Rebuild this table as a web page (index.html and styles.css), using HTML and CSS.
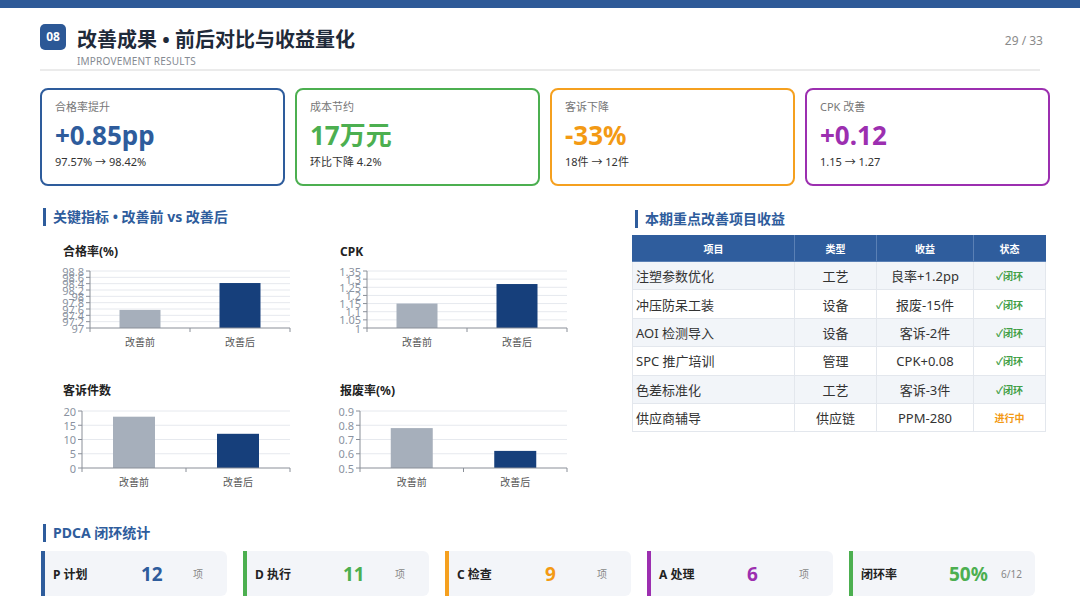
FILE: index.html
```html
<!DOCTYPE html>
<html lang="zh-CN">
<head>
<meta charset="utf-8">
<title>改善成果</title>
<link rel="stylesheet" href="styles.css">
</head>
<body>
<div class="topbar"></div>
<header class="header">
  <div class="brand">
    <div class="badge">08</div>
    <div class="titles">
      <h1 class="title">改善成果 • 前后对比与收益量化</h1>
      <div class="subtitle">IMPROVEMENT RESULTS</div>
    </div>
  </div>
  <div class="page-no">29 / 33</div>
</header>

<section class="kpis">
  <div class="kpi kpi-blue">
    <div class="kpi-label">合格率提升</div>
    <div class="kpi-value">+0.85pp</div>
    <div class="kpi-sub">97.57% → 98.42%</div>
  </div>
  <div class="kpi kpi-green">
    <div class="kpi-label">成本节约</div>
    <div class="kpi-value">17万元</div>
    <div class="kpi-sub">环比下降 4.2%</div>
  </div>
  <div class="kpi kpi-orange">
    <div class="kpi-label">客诉下降</div>
    <div class="kpi-value">-33%</div>
    <div class="kpi-sub">18件 → 12件</div>
  </div>
  <div class="kpi kpi-purple">
    <div class="kpi-label">CPK 改善</div>
    <div class="kpi-value">+0.12</div>
    <div class="kpi-sub">1.15 → 1.27</div>
  </div>
</section>

<section class="mid">
  <div class="left">
    <h2 class="sec-title">关键指标 • 改善前 vs 改善后</h2>
    <div class="charts">
      <div class="chart">
        <div class="chart-title">合格率(%)</div>
        <svg class="plot" width="277" height="90" viewBox="0 0 277 90">
          <g class="grid">
            <line x1="50" x2="250" y1="9" y2="9"/><line x1="50" x2="250" y1="15.33" y2="15.33"/><line x1="50" x2="250" y1="21.67" y2="21.67"/><line x1="50" x2="250" y1="28" y2="28"/><line x1="50" x2="250" y1="34.33" y2="34.33"/><line x1="50" x2="250" y1="40.67" y2="40.67"/><line x1="50" x2="250" y1="47" y2="47"/><line x1="50" x2="250" y1="53.33" y2="53.33"/><line x1="50" x2="250" y1="59.67" y2="59.67"/>
          </g>
          <rect class="bar-before" x="79.5" y="47.95" width="41" height="18.05"/>
          <rect class="bar-after" x="179.5" y="21.03" width="41" height="44.97"/>
          <g class="axis">
            <line x1="50" x2="50" y1="9" y2="66"/><line x1="50" x2="250" y1="66" y2="66"/>
            <line x1="46" x2="50" y1="9" y2="9"/><line x1="46" x2="50" y1="15.33" y2="15.33"/><line x1="46" x2="50" y1="21.67" y2="21.67"/><line x1="46" x2="50" y1="28" y2="28"/><line x1="46" x2="50" y1="34.33" y2="34.33"/><line x1="46" x2="50" y1="40.67" y2="40.67"/><line x1="46" x2="50" y1="47" y2="47"/><line x1="46" x2="50" y1="53.33" y2="53.33"/><line x1="46" x2="50" y1="59.67" y2="59.67"/><line x1="46" x2="50" y1="66" y2="66"/>
            <line x1="50" x2="50" y1="66" y2="70"/><line x1="150" x2="150" y1="66" y2="70"/><line x1="250" x2="250" y1="66" y2="70"/>
          </g>
          <g class="ylab">
            <text x="44" y="9">98.8</text><text x="44" y="15.33">98.6</text><text x="44" y="21.67">98.4</text><text x="44" y="28">98.2</text><text x="44" y="34.33">98</text><text x="44" y="40.67">97.8</text><text x="44" y="47">97.6</text><text x="44" y="53.33">97.4</text><text x="44" y="59.67">97.2</text><text x="44" y="66">97</text>
          </g>
          <g class="xlab"><text x="100" y="80">改善前</text><text x="200" y="80">改善后</text></g>
        </svg>
      </div>
      <div class="chart">
        <div class="chart-title">CPK</div>
        <svg class="plot" width="277" height="90" viewBox="0 0 277 90">
          <g class="grid">
            <line x1="50" x2="250" y1="9" y2="9"/><line x1="50" x2="250" y1="17.14" y2="17.14"/><line x1="50" x2="250" y1="25.29" y2="25.29"/><line x1="50" x2="250" y1="33.43" y2="33.43"/><line x1="50" x2="250" y1="41.57" y2="41.57"/><line x1="50" x2="250" y1="49.71" y2="49.71"/><line x1="50" x2="250" y1="57.86" y2="57.86"/>
          </g>
          <rect class="bar-before" x="79.5" y="41.57" width="41" height="24.43"/>
          <rect class="bar-after" x="179.5" y="22.03" width="41" height="43.97"/>
          <g class="axis">
            <line x1="50" x2="50" y1="9" y2="66"/><line x1="50" x2="250" y1="66" y2="66"/>
            <line x1="46" x2="50" y1="9" y2="9"/><line x1="46" x2="50" y1="17.14" y2="17.14"/><line x1="46" x2="50" y1="25.29" y2="25.29"/><line x1="46" x2="50" y1="33.43" y2="33.43"/><line x1="46" x2="50" y1="41.57" y2="41.57"/><line x1="46" x2="50" y1="49.71" y2="49.71"/><line x1="46" x2="50" y1="57.86" y2="57.86"/><line x1="46" x2="50" y1="66" y2="66"/>
            <line x1="50" x2="50" y1="66" y2="70"/><line x1="150" x2="150" y1="66" y2="70"/><line x1="250" x2="250" y1="66" y2="70"/>
          </g>
          <g class="ylab">
            <text x="44" y="9">1.35</text><text x="44" y="17.14">1.3</text><text x="44" y="25.29">1.25</text><text x="44" y="33.43">1.2</text><text x="44" y="41.57">1.15</text><text x="44" y="49.71">1.1</text><text x="44" y="57.86">1.05</text><text x="44" y="66">1</text>
          </g>
          <g class="xlab"><text x="100" y="80">改善前</text><text x="200" y="80">改善后</text></g>
        </svg>
      </div>
      <div class="chart">
        <div class="chart-title">客诉件数</div>
        <svg class="plot" width="277" height="90" viewBox="0 0 277 90">
          <g class="grid">
            <line x1="42" x2="250" y1="10" y2="10"/><line x1="42" x2="250" y1="24.25" y2="24.25"/><line x1="42" x2="250" y1="38.5" y2="38.5"/><line x1="42" x2="250" y1="52.75" y2="52.75"/>
          </g>
          <rect class="bar-before" x="73" y="15.7" width="42" height="51.3"/>
          <rect class="bar-after" x="177" y="32.8" width="42" height="34.2"/>
          <g class="axis">
            <line x1="42" x2="42" y1="10" y2="67"/><line x1="42" x2="250" y1="67" y2="67"/>
            <line x1="38" x2="42" y1="10" y2="10"/><line x1="38" x2="42" y1="24.25" y2="24.25"/><line x1="38" x2="42" y1="38.5" y2="38.5"/><line x1="38" x2="42" y1="52.75" y2="52.75"/><line x1="38" x2="42" y1="67" y2="67"/>
            <line x1="42" x2="42" y1="67" y2="71"/><line x1="146" x2="146" y1="67" y2="71"/><line x1="250" x2="250" y1="67" y2="71"/>
          </g>
          <g class="ylab">
            <text x="36" y="10">20</text><text x="36" y="24.25">15</text><text x="36" y="38.5">10</text><text x="36" y="52.75">5</text><text x="36" y="67">0</text>
          </g>
          <g class="xlab"><text x="94" y="81">改善前</text><text x="198" y="81">改善后</text></g>
        </svg>
      </div>
      <div class="chart">
        <div class="chart-title">报废率(%)</div>
        <svg class="plot" width="277" height="90" viewBox="0 0 277 90">
          <g class="grid">
            <line x1="43" x2="250" y1="10" y2="10"/><line x1="43" x2="250" y1="24.25" y2="24.25"/><line x1="43" x2="250" y1="38.5" y2="38.5"/><line x1="43" x2="250" y1="52.75" y2="52.75"/>
          </g>
          <rect class="bar-before" x="73.75" y="27.1" width="42" height="39.9"/>
          <rect class="bar-after" x="177.25" y="49.9" width="42" height="17.1"/>
          <g class="axis">
            <line x1="43" x2="43" y1="10" y2="67"/><line x1="43" x2="250" y1="67" y2="67"/>
            <line x1="39" x2="43" y1="10" y2="10"/><line x1="39" x2="43" y1="24.25" y2="24.25"/><line x1="39" x2="43" y1="38.5" y2="38.5"/><line x1="39" x2="43" y1="52.75" y2="52.75"/><line x1="39" x2="43" y1="67" y2="67"/>
            <line x1="43" x2="43" y1="67" y2="71"/><line x1="146.5" x2="146.5" y1="67" y2="71"/><line x1="250" x2="250" y1="67" y2="71"/>
          </g>
          <g class="ylab">
            <text x="37" y="10">0.9</text><text x="37" y="24.25">0.8</text><text x="37" y="38.5">0.7</text><text x="37" y="52.75">0.6</text><text x="37" y="67">0.5</text>
          </g>
          <g class="xlab"><text x="94.75" y="81">改善前</text><text x="198.25" y="81">改善后</text></g>
        </svg>
      </div>
    </div>
  </div>

  <div class="right">
    <h2 class="sec-title">本期重点改善项目收益</h2>
    <table class="proj">
      <colgroup><col class="c1"><col class="c2"><col class="c3"><col class="c4"></colgroup>
      <thead>
        <tr><th>项目</th><th>类型</th><th>收益</th><th>状态</th></tr>
      </thead>
      <tbody>
        <tr><td>注塑参数优化</td><td>工艺</td><td>良率+1.2pp</td><td class="st done">✓闭环</td></tr>
        <tr><td>冲压防呆工装</td><td>设备</td><td>报废-15件</td><td class="st done">✓闭环</td></tr>
        <tr><td>AOI 检测导入</td><td>设备</td><td>客诉-2件</td><td class="st done">✓闭环</td></tr>
        <tr><td>SPC 推广培训</td><td>管理</td><td>CPK+0.08</td><td class="st done">✓闭环</td></tr>
        <tr><td>色差标准化</td><td>工艺</td><td>客诉-3件</td><td class="st done">✓闭环</td></tr>
        <tr><td>供应商辅导</td><td>供应链</td><td>PPM-280</td><td class="st doing">进行中</td></tr>
      </tbody>
    </table>
  </div>
</section>

<section class="pdca">
  <h2 class="sec-title">PDCA 闭环统计</h2>
  <div class="pdca-row">
    <div class="pcard pc-blue"><span class="p-label">P 计划</span><span class="p-num">12</span><span class="p-unit">项</span></div>
    <div class="pcard pc-green"><span class="p-label">D 执行</span><span class="p-num">11</span><span class="p-unit">项</span></div>
    <div class="pcard pc-orange"><span class="p-label">C 检查</span><span class="p-num">9</span><span class="p-unit">项</span></div>
    <div class="pcard pc-purple"><span class="p-label">A 处理</span><span class="p-num">6</span><span class="p-unit">项</span></div>
    <div class="pcard pc-green"><span class="p-label">闭环率</span><span class="p-num">50%</span><span class="p-unit">6/12</span></div>
  </div>
</section>
</body>
</html>
```

FILE: styles.css
```css
* { box-sizing: border-box; }
html, body { margin: 0; padding: 0; }
body {
  width: 1080px;
  height: 608px;
  overflow: hidden;
  background: #ffffff;
  font-family: "Noto Sans", "Noto Sans CJK SC", sans-serif;
  color: #333;
}
h1, h2 { margin: 0; }

.topbar { height: 8px; background: #2e5a98; }

.header {
  margin: 0 40px;
  padding-top: 16px;
  padding-bottom: 1px;
  display: flex;
  justify-content: space-between;
  border-bottom: 2px solid #ebebeb;
}
.brand { display: flex; align-items: flex-start; }
.badge {
  width: 26px;
  height: 26px;
  border-radius: 5px;
  background: #2c5896;
  color: #fff;
  font-size: 12px;
  font-weight: 700;
  line-height: 26px;
  text-align: center;
}
.titles { margin-left: 11px; padding-top: 2px; }
.title {
  font-size: 20px;
  line-height: 28px;
  font-weight: 700;
  color: #1f2a3a;
}
.subtitle {
  font-size: 10px;
  line-height: 14px;
  color: #858a92;
  letter-spacing: 0.2px;
}
.page-no {
  padding-top: 10px;
  font-size: 12px;
  line-height: 14px;
  color: #8a8a8a;
  margin-right: -3px;
}

/* KPI cards */
.kpis {
  margin: 17px 30px 0 40px;
  display: grid;
  grid-template-columns: repeat(4, 245px);
  column-gap: 10px;
}
.kpi {
  height: 98px;
  border: 2px solid;
  border-radius: 8px;
  padding: 10px 13px 0;
}
.kpi-label { font-size: 11px; line-height: 14px; color: #777; }
.kpi-value {
  margin-top: 6px;
  font-size: 26px;
  line-height: 30px;
  font-weight: 700;
}
.kpi-sub { margin-top: 5px; font-size: 11px; line-height: 14px; color: #333; }
.kpi-blue { border-color: #2e5c9c; }
.kpi-blue .kpi-value { color: #2e5c9c; }
.kpi-green { border-color: #4caf50; }
.kpi-green .kpi-value { color: #4caf50; }
.kpi-orange { border-color: #f5a01f; }
.kpi-orange .kpi-value { color: #f39a14; }
.kpi-purple { border-color: #9c2fb0; }
.kpi-purple .kpi-value { color: #9c2fb0; }

/* section titles */
.sec-title {
  font-size: 14px;
  line-height: 18px;
  font-weight: 700;
  color: #2e5c9c;
  border-left: 3px solid #2e5c9c;
  padding-left: 7px;
  margin-left: 3px;
}

/* middle */
.mid {
  margin: 22px 0 0 40px;
  display: flex;
  align-items: flex-start;
}
.left { width: 592px; }
.charts {
  margin-top: 18px;
  display: grid;
  grid-template-columns: 277px 277px;
  row-gap: 31px;
}
.chart-title {
  padding-left: 23px;
  font-size: 12px;
  line-height: 16px;
  font-weight: 700;
  color: #222;
}
.plot { display: block; margin-top: 2px; }
.plot .grid line { stroke: #e6e9ee; stroke-width: 1; }
.plot .axis line { stroke: #8a8f98; stroke-width: 1; }
.bar-before { fill: #a6afbb; }
.bar-after { fill: #163f7b; }
.plot text { font-family: "Noto Sans", "Noto Sans CJK SC", sans-serif; }
.ylab text { font-size: 11px; fill: #8a92a0; text-anchor: end; dominant-baseline: central; }
.xlab text { font-size: 10px; fill: #555; text-anchor: middle; dominant-baseline: central; }

.right { width: 413px; padding-top: 2px; }
.right .sec-title { margin-bottom: 7px; }
.proj {
  width: 413px;
  border-collapse: collapse;
  table-layout: fixed;
}
.proj .c1 { width: 162px; }
.proj .c2 { width: 82px; }
.proj .c3 { width: 97px; }
.proj .c4 { width: 72px; }
.proj th {
  height: 26px;
  padding: 0;
  background: #2f5d9d;
  color: #fff;
  font-size: 10px;
  font-weight: 700;
  border: 1px solid #5a80b5;
  border-top-color: #2f5d9d;
}
.proj th:first-child { border-left-color: #2f5d9d; }
.proj th:last-child { border-right-color: #2f5d9d; }
.proj td {
  height: 28.4px;
  padding: 0;
  font-size: 13px;
  color: #333;
  text-align: center;
  border: 1px solid #e3e7ed;
}
.proj td:first-child { text-align: left; padding-left: 3px; }
.proj tbody tr:nth-child(odd) td { background: #f2f5f9; }
.proj td.st { font-size: 10px; font-weight: 700; }
.proj td.done { color: #43a047; }
.proj td.doing { color: #f39a14; }

/* PDCA */
.pdca { margin: 33px 0 0 40px; }
.pdca .sec-title { margin-bottom: 9px; }
.pdca-row {
  margin-left: 1px;
  display: grid;
  grid-template-columns: repeat(5, 186px);
  column-gap: 16px;
}
.pcard {
  height: 45px;
  background: #f3f5f9;
  border-left: 4px solid;
  border-radius: 0 6px 6px 0;
  padding-left: 8px;
  display: flex;
  align-items: center;
}
.p-label { width: 88px; font-size: 12px; font-weight: 700; color: #222; }
.p-num { width: 52px; font-size: 19px; font-weight: 700; line-height: 24px; }
.p-unit { font-size: 10px; color: #888; }
.pc-blue { border-left-color: #2e5c9c; }
.pc-blue .p-num { color: #2e5c9c; }
.pc-green { border-left-color: #4caf50; }
.pc-green .p-num { color: #4caf50; }
.pc-orange { border-left-color: #f5a01f; }
.pc-orange .p-num { color: #f39a14; }
.pc-purple { border-left-color: #9c2fb0; }
.pc-purple .p-num { color: #9c2fb0; }
```
